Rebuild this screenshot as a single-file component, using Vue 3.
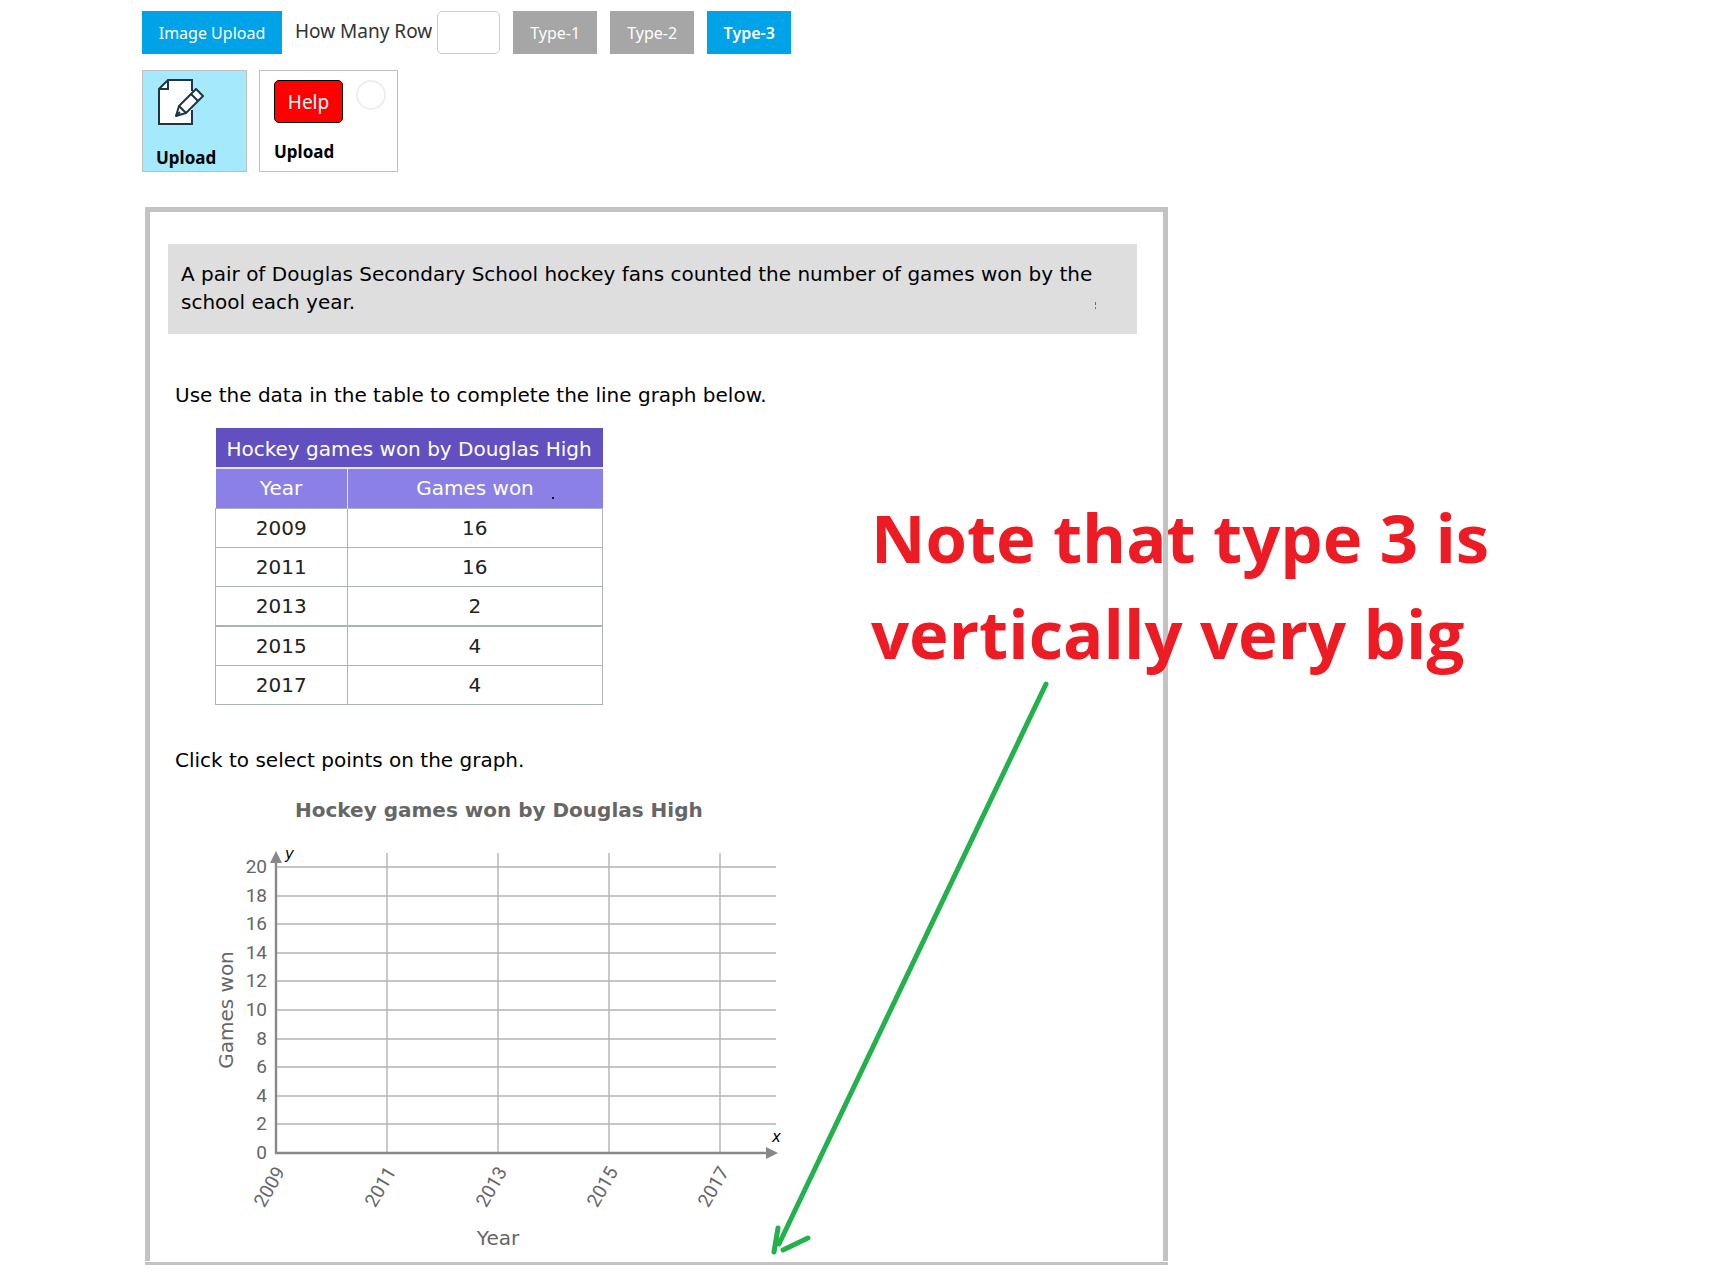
<script setup>
import { ref } from 'vue'

const rowCount = ref('')
const rows = [
  { year: 2009, won: 16 },
  { year: 2011, won: 16 },
  { year: 2013, won: 2 },
  { year: 2015, won: 4 },
  { year: 2017, won: 4 }
]
const yTicks = [0, 2, 4, 6, 8, 10, 12, 14, 16, 18, 20]
// Plot origin is (61, 309); 14.3 units per game, 111 per year step
const yPos = (v) => Math.round(309 - v * 14.3)
const xPos = (i) => 61 + i * 111
</script>

<template>
  <main class="page">
    <form class="toolbar" @submit.prevent>
      <button type="button" class="btn blue upload-btn">Image Upload</button>
      <label class="row-label" for="row-count">How Many Row</label>
      <input id="row-count" v-model="rowCount" class="row-input" type="text" />
      <button type="button" class="btn">Type-1</button>
      <button type="button" class="btn">Type-2</button>
      <button type="button" class="btn blue strong">Type-3</button>
    </form>

    <div class="cards">
      <button type="button" class="card edit-card">
        <svg class="edit-icon" width="48" height="48" viewBox="0 0 48 48" aria-hidden="true">
          <path d="M11 2 H36 V47 H3 V11 Z" fill="#fff" />
          <path d="M36 13 V2 H12 L3 11 V46 H36 V32" fill="none" stroke="#1f3545" stroke-width="2" />
          <path d="M12 2 V11 H3" fill="none" stroke="#1f3545" stroke-width="2" />
          <path d="M40 11 L47 18 L30 35 L20 38 L23 28 Z" fill="#fff" stroke="#1f3545" stroke-width="2" stroke-linejoin="round" />
          <path d="M35 16 L42 23 M23 28 L30 35 M20 38 L24 34" fill="none" stroke="#1f3545" stroke-width="2" />
        </svg>
        <span class="card-title">Upload</span>
      </button>
      <div class="card help-card">
        <div class="help-row">
          <button type="button" class="help-btn">Help</button>
          <input id="upload-choice" class="choice" type="radio" name="upload-choice" />
        </div>
        <label class="card-title" for="upload-choice">Upload</label>
      </div>
    </div>

    <div class="frame">
      <section class="panel">
        <p class="intro">
          A pair of Douglas Secondary School hockey fans counted the number of games won by the school each year.
          <span class="mark" aria-hidden="true"></span>
        </p>
        <p class="prompt">Use the data in the table to complete the line graph below.</p>

        <table class="data">
          <thead>
            <tr class="title"><th colspan="2">Hockey games won by Douglas High</th></tr>
            <tr class="heads">
              <th class="year">Year</th>
              <th class="won">Games won<span class="dot" aria-hidden="true"></span></th>
            </tr>
          </thead>
          <tbody>
            <tr v-for="r in rows" :key="r.year"><td>{{ r.year }}</td><td>{{ r.won }}</td></tr>
          </tbody>
        </table>

        <p class="prompt second">Click to select points on the graph.</p>
        <h2 class="chart-title">Hockey games won by Douglas High</h2>

        <svg class="chart" width="570" height="417" viewBox="0 0 570 417" role="img" aria-label="Hockey games won by Douglas High">
          <g stroke="#b3b3b3" stroke-width="1.4">
            <line v-for="t in yTicks.slice(1)" :key="t" x1="61" :y1="yPos(t)" x2="561" :y2="yPos(t)" />
            <line v-for="i in 4" :key="i" :x1="xPos(i)" y1="9" :x2="xPos(i)" y2="309" />
          </g>
          <path d="M61 16 V309 H552" fill="none" stroke="#888" stroke-width="2.4" />
          <path d="M61 7 L67 19 H55 Z M563 309 L551 303 V315 Z" fill="#888" />
          <g class="tick">
            <text v-for="t in yTicks" :key="t" x="52" :y="yPos(t) + 6" text-anchor="end">{{ t }}</text>
            <text
              v-for="(r, i) in rows"
              :key="r.year"
              text-anchor="middle"
              :transform="`translate(${xPos(i) - 1} 346) rotate(-60)`"
            >{{ r.year }}</text>
          </g>
          <g class="axis-name">
            <text text-anchor="middle" transform="translate(18 166) rotate(-90)">Games won</text>
            <text x="283" y="401" text-anchor="middle">Year</text>
          </g>
          <g class="axis-letter">
            <text x="70" y="15">y</text>
            <text x="557" y="298">x</text>
          </g>
        </svg>
      </section>

      <p class="note">Note that type 3 is<br />vertically very big</p>
      <svg class="arrow" width="290" height="580" viewBox="0 0 290 580" aria-hidden="true">
        <path d="M281 5 L14 565 M13 549 L9 573 M43 559 L18 571" />
      </svg>
    </div>
  </main>
</template>

<style>
body {
  background: #fff;
}
</style>

<style scoped>
.page {
  box-sizing: border-box;
  padding: 11px 142px 9px;
  font-family: "DejaVu Sans", sans-serif;
  color: #000;
}
.toolbar {
  display: flex;
  align-items: center;
  font-family: "Noto Sans", sans-serif;
}
.btn {
  width: 84px;
  height: 43px;
  padding: 0;
  margin-left: 13px;
  border: 0;
  background: #a6a6a6;
  color: #fff;
  font: 16px "Noto Sans", sans-serif;
}
.btn.blue {
  background: #00a2e8;
}
.btn.strong {
  font-weight: 600;
}
.btn.upload-btn {
  width: 140px;
  margin-left: 0;
}
.row-label {
  margin-left: 13px;
  font-size: 19px;
  line-height: 41px;
  height: 43px;
  color: #333;
}
.row-input {
  box-sizing: border-box;
  width: 63px;
  height: 43px;
  margin-left: 5px;
  padding: 0 8px;
  border: 1px solid #ccc;
  border-radius: 5px;
  font: 16px "Noto Sans", sans-serif;
}
.cards {
  display: flex;
  gap: 12px;
  margin-top: 16px;
}
.card {
  box-sizing: border-box;
  height: 102px;
  border: 1px solid #c0c0c0;
  background: #fff;
}
.edit-card {
  display: flex;
  flex-direction: column;
  align-items: flex-start;
  width: 105px;
  padding: 7px 13px 0;
  background: #a5e9fd;
}
.edit-icon {
  flex-shrink: 0;
  display: block;
  margin-bottom: 18px;
}
.card-title {
  display: block;
  color: #000;
  font: bold 17px/28px "Noto Sans", sans-serif;
}
.help-card {
  width: 139px;
  padding: 9px 11px 0 14px;
}
.help-row {
  display: flex;
  gap: 13px;
  margin-bottom: 15px;
}
.help-btn {
  width: 69px;
  height: 43px;
  padding: 1px 0 0;
  border: 1px solid #000;
  border-radius: 5px;
  background: #f00;
  color: #fff;
  font: 19px "Noto Sans", sans-serif;
}
.choice {
  appearance: none;
  width: 30px;
  height: 30px;
  margin: 0;
  border: 2px solid #eee;
  border-radius: 50%;
  background: #fff;
}
.frame {
  position: relative;
  max-width: 1023px;
  margin: 35px 0 0 3px;
  padding-bottom: 1px;
  border-bottom: 3px solid #c3c3c3;
}
.panel {
  border: 5px solid #c3c3c3;
  border-bottom: 0;
  padding: 32px 26px 0 18px;
}
.intro {
  position: relative;
  margin: 0;
  padding: 16px 36px 18px 13px;
  background: #dedede;
  font-size: 20px;
  line-height: 28px;
}
.mark {
  position: absolute;
  right: 41px;
  bottom: 25px;
  width: 1px;
  height: 2px;
  border-top: 3px solid #3a7ca8;
  border-bottom: 2px solid #3a7ca8;
}
.prompt {
  margin: 47px 0 0 7px;
  font-size: 20px;
  line-height: 28px;
}
.data {
  width: 388px;
  margin: 19px 0 0 47px;
  border-collapse: collapse;
  font-size: 20px;
  line-height: 38px;
  text-align: center;
  color: #222;
}
.data th {
  padding: 0;
  color: #fff;
  font-weight: normal;
  line-height: 39px;
}
.data td {
  padding: 0;
  border: 1px solid #aab4b8;
}
.data .title th {
  padding-top: 3px;
  line-height: 36px;
  background: #6250c0;
  border-bottom: 2px solid #e6e3f8;
}
.heads th {
  background: #8a80e6;
}
.heads .year {
  width: 131px;
  border-right: 1px solid #e6e3f8;
}
.heads .won {
  position: relative;
}
.dot {
  position: absolute;
  right: 49px;
  bottom: 9px;
  width: 2px;
  height: 2px;
  background: #111;
}
.data tbody tr:nth-child(3) td {
  border-bottom-width: 2px;
}
.prompt.second {
  margin-top: 41px;
}
.chart-title {
  margin: 22px 0 0 127px;
  color: #666;
  font-size: 20px;
  line-height: 28px;
}
.chart {
  display: block;
  margin: 20px 0 0 47px;
}
.tick {
  fill: #666;
  font: 19px Roboto, sans-serif;
}
.axis-name {
  fill: #666;
  font: 20px "DejaVu Sans", sans-serif;
}
.axis-letter {
  fill: #000;
  font: italic 15px "DejaVu Sans", sans-serif;
}
.note {
  position: absolute;
  left: 726px;
  top: 282px;
  margin: 0;
  color: #ed1c24;
  font: bold 67px/96px "Open Sans", sans-serif;
  white-space: nowrap;
}
.arrow {
  position: absolute;
  left: 620px;
  top: 472px;
  fill: none;
  stroke: #22b14c;
  stroke-width: 5;
  stroke-linecap: round;
}
</style>
